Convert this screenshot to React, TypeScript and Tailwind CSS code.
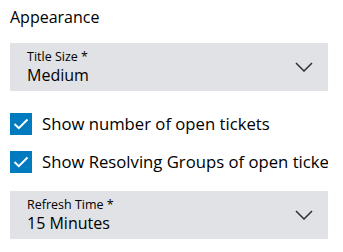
import React from "react";

function Chevron() {
  return (
    <svg width="18" height="10" viewBox="0 0 18 10" fill="none" className="shrink-0">
      <path d="M1 1 L9 9 L17 1" stroke="#2e3033" strokeWidth="1.5" />
    </svg>
  );
}

function Select({ label, value }: { label: string; value: string }) {
  return (
    <div className="w-[318px] h-[48px] bg-[#e0e2e5] flex items-center pl-[17px] pr-[15px]">
      <div className="flex-1 flex flex-col gap-[2px] pt-[1px]">
        <span className="text-[12.5px] leading-[14px] text-[#000]">{label}</span>
        <span className="text-[16px] leading-[19px] text-[#000]">{value}</span>
      </div>
      <Chevron />
    </div>
  );
}

function Check({ text }: { text: string }) {
  return (
    <div className="w-[318px] overflow-hidden flex items-center gap-[10px] h-[24px] whitespace-nowrap">
      <div className="w-[22px] h-[22px] bg-[#007bc0] flex items-center justify-center shrink-0">
        <svg width="16" height="12" viewBox="0 0 16 12" fill="none">
          <path d="M1.5 6 L5.8 10.2 L14.5 1.5" stroke="#fff" strokeWidth="2" />
        </svg>
      </div>
      <span className="text-[16.7px] text-[#000]">{text}</span>
    </div>
  );
}

export default function App() {
  return (
    <div
      className="w-[343px] h-[252px] bg-white overflow-hidden pl-[10px] pt-[6px]"
      style={{ fontFamily: '"Open Sans", "Noto Sans", sans-serif' }}
    >
      <div className="text-[16px] leading-[22px] text-[#000]">Appearance</div>
      <div className="mt-[15px]">
        <Select label="Title Size *" value="Medium" />
      </div>
      <div className="mt-[21px] flex flex-col gap-[14px]">
        <Check text="Show number of open tickets" />
        <Check text="Show Resolving Groups of open tickets" />
      </div>
      <div className="mt-[17px]">
        <Select label="Refresh Time *" value="15 Minutes" />
      </div>
    </div>
  );
}
